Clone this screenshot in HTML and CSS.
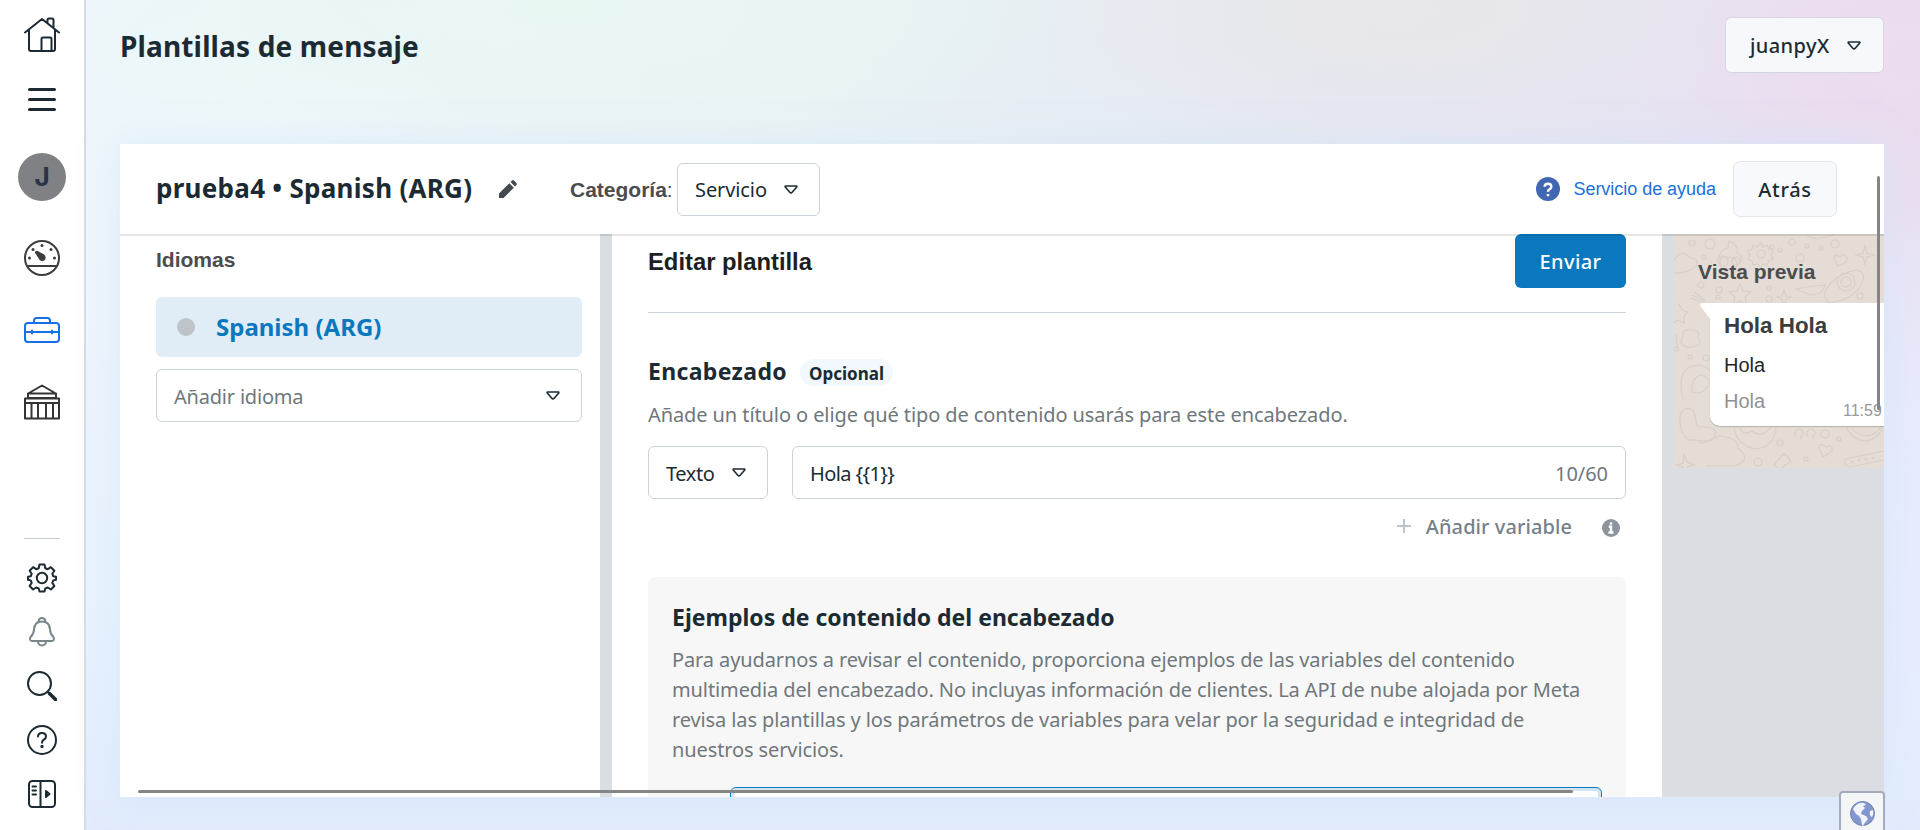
FILE: index.html
```html
<!DOCTYPE html>
<html lang="es">
<head>
<meta charset="utf-8">
<title>Plantillas de mensaje</title>
<link rel="stylesheet" href="styles.css">
</head>
<body>
<div class="app">
  <nav class="rail">
    <svg class="ic home" width="36" height="36" viewBox="0 0 36 36"><path d="M1 15.5 18 2l17 13.500M5 13v19q0 2 2 2h22q2 0 2-2V13M23.500 6V3q0-1.500 1.500-1.500h3q1.500 0 1.500 1.500v8M17.500 34V22q0-1.500 1.500-1.500h7q1.500 0 1.500 1.500v12"/></svg>
    <svg class="ic menu" width="28" height="23" viewBox="0 0 28 23"><path d="M1.500 1.500h25M1.500 11.500h25M1.500 21.500h25"/></svg>
    <div class="avatar">J</div>
    <svg class="ic gauge" width="36" height="36" viewBox="0 0 36 36"><circle cx="18" cy="18" r="17"/><path d="M4 26h28"/><path class="needle" d="M12 12.500q0-1 1.200-.5l6 3.200q2 1.300 1.300 3.300-1.500 2.700-4 1z"/><g class="dots"><circle cx="5.500" cy="18" r="1.500"/><circle cx="9" cy="9.500" r="1.500"/><circle cx="18" cy="5.500" r="1.500"/><circle cx="27" cy="9.500" r="1.500"/><circle cx="30.500" cy="18" r="1.500"/></g></svg>
    <svg class="ic case" width="36" height="26" viewBox="0 0 36 26"><rect x="1" y="6" width="34" height="19" rx="3"/><path d="M10 6V3.500Q10 1 12.500 1h11Q26 1 26 3.500V6M1 15h34M8 13.500v3M28 13.500v3"/></svg>
    <svg class="ic bank" width="36" height="36" viewBox="0 0 36 36"><path d="M5 9 18 1.500 31 9M4 9.500h28V14H4zM1 14.500h34V19H1zM1 19v15.500h34V19M7.500 19v15.500M14 19v15.500M22 19v15.500M29 19v15.500"/></svg>
    <span class="rule"></span>
    <svg class="ic gear" width="30" height="30" viewBox="0 0 30 30"><path d="M12.500 1.500h5l.8 3.700 2.500 1 3.100-2 3.500 3.500-2.100 3.100 1 2.500 2.700.4v3l-2.700.7-1 2.500 2.100 3.100-3.500 3.500-3.100-2-2.500 1-.8 3h-5l-.8-3-2.500-1-3.100 2-3.500-3.500 2.100-3.100-1-2.500-2.700-.7v-3l2.700-.4 1-2.500-2.100-3.100 3.500-3.500 3.100 2 2.500-1z"/><circle cx="15" cy="15" r="5.200"/></svg>
    <svg class="ic bell" width="28" height="30" viewBox="0 0 28 30"><path d="M10.500 4.500a3.500 3.500 0 0 1 7 0M10 24.500a4 4 0 0 0 8 0M14 4.500q-7.500 0-8 8-.3 5-3.500 7.500-1.500 3.500 1.500 4h20q3-.5 1.500-4-3.200-2.500-3.500-7.500-.5-8-8-8z"/></svg>
    <svg class="ic search" width="30" height="30" viewBox="0 0 30 30"><circle cx="12.500" cy="12.500" r="11.500"/><path d="m20.500 20.500 2 2"/><path class="thick" d="m22.500 22.500 6 6"/></svg>
    <svg class="ic help" width="30" height="30" viewBox="0 0 30 30"><circle cx="15" cy="15" r="14"/><path d="M11 11.500q0-3.500 4-3.500t4 3.500q0 2-2 3-2 1-2 3.200"/><circle class="solid" cx="15" cy="21.500" r=".7"/></svg>
    <svg class="ic panel" width="28" height="28" viewBox="0 0 28 28"><rect x="1" y="1" width="26" height="26" rx="3.500"/><path d="M12.500 1v26M4.500 6.500H8M4.500 10.500H8M4.500 14.500H8"/><path class="solid" d="m18 11 3.500 3-3.500 3z"/></svg>
  </nav>

  <main class="main">
    <header class="top">
      <h1>Plantillas de mensaje</h1>
      <button class="account"><span>juanpyX</span><svg class="caret" width="14" height="9" viewBox="0 0 14 9"><path d="M1.600 1h10.800q.8.300.3 1L8.200 7.200Q7 8.600 5.800 7.200L1.300 2q-.5-.7.300-1z"/></svg></button>
    </header>

    <section class="card">
      <header class="card-head">
        <h2>prueba4 • Spanish (ARG)</h2>
        <svg class="pencil" width="18" height="18" viewBox="0 0 18 18"><path d="M0 18v-4.500L10.300 3.200l4.500 4.500L4.500 18zM11.500 2 13 .6q1-1 2 0L17.400 3q1 1 0 2L16 6.500z"/></svg>
        <span class="cat">Categoría<i>:</i></span>
        <button class="select service"><span>Servicio</span><svg class="caret" width="14" height="9" viewBox="0 0 14 9"><path d="M1.600 1h10.800q.8.300.3 1L8.200 7.200Q7 8.600 5.800 7.200L1.300 2q-.5-.7.300-1z"/></svg></button>
        <svg class="q" width="24" height="24" viewBox="0 0 24 24"><circle cx="12" cy="12" r="12"/><path d="M8.700 9.800q0-3 3.300-3t3.300 3q0 1.400-1.500 2.200-1.800.9-1.800 2.700M12 17v2.200"/></svg>
        <a class="support">Servicio de ayuda</a>
        <button class="back"><span>Atrás</span></button>
      </header>

      <div class="cols">
        <aside class="langs">
          <h3>Idiomas</h3>
          <div class="lang"><span class="dot"></span><b>Spanish (ARG)</b></div>
          <button class="select add-lang"><span>Añadir idioma</span><svg class="caret" width="14" height="9" viewBox="0 0 14 9"><path d="M1.600 1h10.800q.8.300.3 1L8.200 7.200Q7 8.600 5.800 7.200L1.300 2q-.5-.7.300-1z"/></svg></button>
        </aside>

        <section class="editor">
          <div class="edit-head"><h3>Editar plantilla</h3><button class="send"><span>Enviar</span></button></div>
          <div class="field-title"><h4>Encabezado</h4><span class="pill">Opcional</span></div>
          <p class="desc">Añade un título o elige qué tipo de contenido usarás para este encabezado.</p>
          <div class="row">
            <button class="select type"><span>Texto</span><svg class="caret" width="14" height="9" viewBox="0 0 14 9"><path d="M1.600 1h10.800q.8.300.3 1L8.200 7.200Q7 8.600 5.800 7.200L1.300 2q-.5-.7.300-1z"/></svg></button>
            <div class="input"><span class="value">Hola {{1}}</span><span class="count">10/60</span></div>
          </div>
          <div class="add-var">
            <svg class="plus" width="14" height="14" viewBox="0 0 14 14"><path d="M7 0v14M0 7h14"/></svg>
            <span>Añadir variable</span>
            <svg class="info" width="18" height="18" viewBox="0 0 18 18"><circle cx="9" cy="9" r="9"/><path d="M9 3.300v2.400M6.800 7.800H9v5.400M6.500 13.500h5"/></svg>
          </div>
          <div class="samples">
            <h4>Ejemplos de contenido del encabezado</h4>
            <p>Para ayudarnos a revisar el contenido, proporciona ejemplos de las variables del contenido<br>multimedia del encabezado. No incluyas información de clientes. La API de nube alojada por Meta<br>revisa las plantillas y los parámetros de variables para velar por la seguridad e integridad de<br>nuestros servicios.</p>
            <div class="sample-input"></div>
          </div>
        </section>

        <aside class="preview">
          <svg class="doodles" width="210" height="234" viewBox="0 0 210 234">
            <path d="M0 26q8-12 16-2 10 0 6 8Q12 40 0 39M45 23q2-8 9-9l1-7q10 4 8 12 7 3 3 9M47 33q-4-11 7-10 10 0 9 9M44 27a5 5 0 1 0 10 0a5 5 0 1 0-10 0M58 27a4 4 0 1 0 8 0a4 4 0 1 0-8 0M47 34q9 4 17-3M160 25q0-7 6-2 4-5 7 1 1 5-9 8zM191 12l2 7 7 2-7 2-2 7-2-7-7-2 7-2zM66 50l3 7 8 1-6 5 2 8-7-4-7 4 2-8-6-5 8-1zM110 56l2 6 6 1-6 2-2 7-2-7-6-2 6-1zM122 55q13-3 29-4-2 10-14 10zM150 62q5-20 32-26 12 2 5 15-8 15-32 18zM133 0q5 9 28 0M5 70l3 6 6 2-4 4 0 7-6-3-4 3M18 61l13 6M17 64l14 5M20 58l11 8M2 100l1 13M9 102q0-8 8-6 10 0 7 7 5 9-6 10Q7 114 7 107zM9 165q-8-32 15-34 15 1 15 18M18 158q-1-15 9-17 8 1 8 9-5 12-17 8zM6 182q4-12 14-5 2 10 3 15l14 2q9 3 0 13l-22-1Q5 200 6 182zM14 207q8-3 14 2l18-7q18 2 18 12 15 12-4 18H32M60 193q2 18 22 22 20-3 20-24M66 194q3 8 12 3 10 8 19-4M10 220l3 8 7 3-7 2-2 8-2-8-7-2 7-2zM100 231l10-12 7 8-12 9zM145 215q0-8 7-2 7-4 6 4l-9 6zM172 192q5 14 20 15 13-2 17-15M176 192q5 8 15 10 12-1 16-10M172 225l38-8M172 225q-3 7 4 8l34-7M121 203q-1-8 5-8 6 2 0 10M133 203q-1-8 5-8 6 2 0 10"/>
            <circle cx="87" cy="20" r="4"/><path d="m87 9 2 4 4-2 2 4 4 2-2 4 2 4-4 2-2 4-4-1-2 3-4-3-4 1-1-4-4-2 2-4-2-4 4-2 1-4 4 2z"/>
            <circle cx="172" cy="48" r="9"/><circle cx="172" cy="48" r="5"/><circle cx="36" cy="10" r="5"/><circle cx="18" cy="9" r="3"/><circle cx="98" cy="13" r="2"/><circle cx="118" cy="8" r="3"/><circle cx="106" cy="16" r="2"/><circle cx="133" cy="12" r="2"/><circle cx="147" cy="14" r="2"/><circle cx="126" cy="24" r="4"/><circle cx="161" cy="10" r="4"/><circle cx="30" cy="23" r="2"/><circle cx="27" cy="51" r="3"/><circle cx="45" cy="56" r="3"/><circle cx="44" cy="63" r="2"/><circle cx="95" cy="54" r="2"/><circle cx="95" cy="65" r="3"/><circle cx="112" cy="42" r="3"/><circle cx="186" cy="62" r="3"/><circle cx="16" cy="123" r="2"/><circle cx="32" cy="124" r="3"/><circle cx="2" cy="115" r="2"/><circle cx="84" cy="228" r="4"/><circle cx="132" cy="225" r="2"/><circle cx="106" cy="209" r="3"/><circle cx="151" cy="200" r="4"/><circle cx="165" cy="205" r="2"/><circle cx="178" cy="228" r="1"/><circle cx="185" cy="226" r="1"/><circle cx="192" cy="225" r="1"/><circle cx="199" cy="224" r="1"/>
          </svg>
          <h3>Vista previa</h3>
          <div class="bubble">
            <svg class="tail" width="12" height="19" viewBox="0 0 12 19"><path d="M12 0H3Q0 0 1.500 3.200L12 17z"/></svg>
            <b>Hola Hola</b>
            <p>Hola</p>
            <p class="foot">Hola</p>
            <time>11:59</time>
          </div>
        </aside>
      </div>
      <span class="vbar"></span>
      <span class="hbar"></span>
    </section>
  </main>
  <div class="globe"><svg width="25" height="25" viewBox="0 0 25 25"><circle cx="12.500" cy="12.500" r="12" fill="#8197cd" stroke="#7183b5"/><path fill="#f1f4fa" d="M5 5Q9 .5 14 2l2 2-3 1 2 2-3 3-1 3 5 2 2 3-4 5-1 2-1-1-1-6-2-3-3-2-3-5zM20 10l3-1q1 4-1 7-3-1-2-6z"/></svg></div>
</div>
</body>
</html>
```
FILE: styles.css
```css
* { box-sizing: border-box; }
body { margin: 0; overflow: hidden; font: 20px/30px "Noto Sans", "Open Sans", sans-serif; color: #1c2b33; }
h1, h2, h3, h4, p { margin: 0; }
button { font: inherit; color: inherit; margin: 0; padding: 0; display: flex; align-items: center; white-space: nowrap; }
button span { padding-top: 2px; }
svg { display: block; flex: none; }

.app {
  display: flex; width: 1920px; height: 830px; position: relative;
  background:
    radial-gradient(ellipse 260px 200px at 1900px 60px, #ecdcef, transparent),
    radial-gradient(ellipse 560px 150px at 560px 10px, #e9f7f3, transparent),
    radial-gradient(ellipse 250px 140px at 230px 90px, #ecf8fa, transparent),
    radial-gradient(ellipse 400px 130px at 1400px 10px, #e8e8ea, transparent),
    linear-gradient(180deg, transparent 200px, #e6ebfd 620px, transparent 830px) 1884px 0 / 36px 830px no-repeat,
    linear-gradient(180deg, transparent 200px, #e8f2fe 600px, #e1ebfc 830px),
    linear-gradient(90deg, #eef5fb 86px, #e8f2f5 800px, #e5e6f1 1400px, #e8dff2 1920px);
}

/* Left rail */
.rail { flex: none; width: 86px; height: 830px; padding-top: 17px; background: #fff; border-right: 2px solid #d5dce3; display: flex; flex-direction: column; align-items: center; }
.ic { fill: none; stroke: #1c2b33; stroke-width: 2; stroke-linecap: round; stroke-linejoin: round; }
.solid, .needle { fill: currentColor; }
.dots { fill: #3c3d3e; stroke: none; }
.menu { margin-top: 35px; stroke-width: 3; }
.avatar { width: 48px; height: 48px; margin-top: 42px; border-radius: 50%; background: #808184; color: #283346; font: 700 26px/47px Inter, "Noto Sans", sans-serif; text-align: center; }
.gauge { margin-top: 39px; stroke: #3c3d3e; color: #3c3d3e; }
.case { margin-top: 41px; stroke: #1870e8; }
.bank { margin-top: 41px; stroke: #343536; }
.rule { width: 36px; height: 1px; margin-top: 118px; background: #c5ced7; }
.gear { margin-top: 24px; }
.bell { margin-top: 24px; stroke: #78858b; }
.search { margin-top: 24px; }
.thick { stroke-width: 3.500px; }
.help { margin-top: 24px; }
.panel { margin-top: 25px; }

/* Page header */
.main { flex: 1; padding: 0 36px 0 34px; }
.top { height: 144px; padding-top: 17px; display: flex; justify-content: space-between; align-items: flex-start; }
h1 { font-size: 28px; line-height: 58px; letter-spacing: .15px; font-weight: 700; }
.account { width: 159px; height: 56px; padding: 0 22px 0 24px; justify-content: space-between; background: #f7f8fb; border: 1px solid #d6d6e2; border-radius: 6px; font-weight: 500; letter-spacing: .4px; }
.caret { fill: none; stroke: #1c2b33; stroke-width: 1.600; stroke-linejoin: round; }

/* Card */
.card { position: relative; width: 1764px; height: 653px; overflow: hidden; background: #fff; box-shadow: 0 0 30px #cde5fa88; }
.card-head { position: relative; z-index: 1; height: 90px; padding: 0 47px 0 36px; display: flex; align-items: center; box-shadow: 0 2px 0 rgba(0,0,0,.1); }
h2 { width: 343px; font-size: 26px; line-height: 40px; letter-spacing: .28px; padding-bottom: 3px; white-space: nowrap; }
.pencil { fill: #43494d; }
.cat { width: 107px; margin-left: 53px; padding-top: 2px; font: bold 21px/30px "Liberation Sans", sans-serif; color: #4b4c4f; }
.cat i { font-style: normal; font-weight: 400; }
.select { height: 53px; background: #fff; border: 1px solid #cbd2d9; border-radius: 6px; justify-content: space-between; letter-spacing: -.4px; }
.service { width: 143px; padding: 0 21px 0 17px; letter-spacing: -.1px; }
.q { margin-left: auto; fill: #4267b2; }
.q path { fill: none; stroke: #fff; stroke-width: 2.500; }
.support { margin: 0 17px 0 13px; font: 18px/30px "Liberation Sans", sans-serif; letter-spacing: -.03px; color: #216fdb; white-space: nowrap; }
.back { width: 104px; height: 56px; justify-content: center; background: #f7f9fc; border: 1px solid #e3e7ec; border-radius: 7px; font-weight: 500; letter-spacing: .7px; }

.cols { height: 563px; display: flex; gap: 12px; background: #dadde1; }
.cols h3 { font-family: "Liberation Sans", sans-serif; color: #4b4c4f; font-size: 21px; line-height: 24px; }
.langs { width: 480px; padding: 14px 18px 0 36px; background: #fff; }
.lang { margin-top: 25px; height: 60px; padding-left: 21px; display: flex; align-items: center; gap: 21px; background: #e0edf7; border-radius: 6px; }
.dot { width: 18px; height: 18px; border-radius: 50%; background: #bec3c9; }
.lang b { color: #0a78be; font-size: 24px; }
.add-lang { width: 426px; margin-top: 12px; padding: 0 21px 0 17px; color: #6f777c; letter-spacing: -.2px; }

.editor { width: 1050px; padding: 0 36px; background: #fff; overflow: hidden; }
.edit-head { height: 79px; display: flex; justify-content: space-between; border-bottom: 1px solid #cbd2d9; }
.edit-head h3 { color: #1c1e21; font-size: 23.800px; line-height: 55px; }
.send { width: 111px; height: 54px; justify-content: center; border: 0; border-radius: 6px; background: #0a78be; color: #fff; font-weight: 500; letter-spacing: .4px; }
.field-title { display: flex; height: 30px; margin-top: 44px; gap: 13px; }
h4 { font-size: 23px; line-height: 28px; white-space: nowrap; }
.field-title h4 { letter-spacing: .35px; }
.pill { width: 93px; height: 27px; margin-top: 2px; border-radius: 14px; background: #f2f8fd; font-size: 17px; line-height: 29px; font-weight: 700; text-align: center; }
.desc { margin-top: 13px; color: #6f777c; white-space: nowrap; letter-spacing: -.09px; }
.row { display: flex; gap: 24px; margin-top: 16px; }
.type { width: 120px; padding: 0 21px 0 17px; }
.input { flex: 1; height: 53px; padding: 2px 17px 0; display: flex; align-items: center; justify-content: space-between; border: 1px solid #cbd2d9; border-radius: 6px; letter-spacing: -.6px; }
.count { color: #6f777c; letter-spacing: -.05px; }
.add-var { height: 30px; margin-top: 12px; padding-right: 6px; display: flex; align-items: center; justify-content: flex-end; color: #76808a; font-weight: 500; letter-spacing: .07px; }
.add-var span { padding-top: 2px; }
.plus { margin-right: 15px; stroke: #bcc2c9; stroke-width: 2; }
.info { margin: 4px 0 0 30px; fill: #8d949e; }
.info path { fill: none; stroke: #fff; stroke-width: 2.400; }
.samples { margin-top: 36px; height: 300px; padding: 25px 24px 0; border-radius: 6px; background: #f7f7f7; }
.samples h4 { line-height: 30px; }
.samples p { margin-top: 13px; color: #6f777c; white-space: nowrap; letter-spacing: -.11px; }
.sample-input { height: 60px; margin: 22px 0 0 58px; border: 1px solid #0a78be; border-radius: 6px; box-shadow: inset 0 0 0 3px #d0e4f2; background: #fff; }

/* Message preview */
.preview { width: 210px; height: 234px; position: relative; overflow: hidden; padding: 26px 0 0 24px; background: #e4dcd5; }
.doodles { position: absolute; left: 0; top: 0; fill: none; stroke: #d8cfc8; stroke-width: 1.200; }
.preview h3 { position: relative; white-space: nowrap; }
.bubble { position: relative; width: 260px; height: 123px; margin: 19px 0 0 12px; padding: 8px 14px; background: #fff; border-radius: 0 10px 10px 10px; box-shadow: 0 1px 1px #b7b0aa; font: 20px/24px "Liberation Sans", sans-serif; }
.tail { position: absolute; left: -11px; top: 0; fill: #fff; }
.bubble b { display: block; color: #3b3c3e; font-size: 22.400px; line-height: 30px; }
.bubble p { margin-top: 12px; color: #262626; }
.bubble .foot { color: #919191; }
.bubble time { position: absolute; left: 133px; top: 96px; font-size: 16px; color: #999; }

.vbar, .hbar { position: absolute; z-index: 2; border-radius: 2px; background: #858585; }
.vbar { left: 1757px; top: 32px; width: 3px; height: 234px; }
.hbar { left: 18px; top: 646px; width: 1435px; height: 3px; }
.globe { position: absolute; z-index: 3; left: 1839px; top: 791px; width: 46px; height: 50px; display: flex; justify-content: center; padding-top: 8px; background: #f4f5f7; border: 2px solid #a4abbd; border-radius: 4px; }
```
